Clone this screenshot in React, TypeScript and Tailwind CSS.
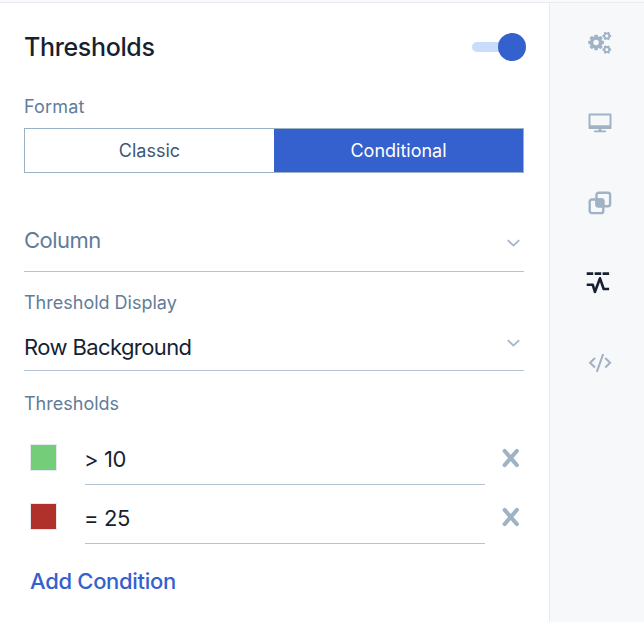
import React from "react";

function Gear({ x, y, r, teeth }: { x: number; y: number; r: number; teeth: number }) {
  const width = r * 0.46;
  return (
    <g transform={`translate(${x} ${y})`}>
      <circle r={r * 0.57} fill="none" stroke="#9fb3c5" strokeWidth={r * 0.44} />
      {Array.from({ length: teeth }, (_, i) => (
        <rect
          key={i}
          x={-width / 2}
          y={-r}
          width={width}
          height={r * 0.4}
          rx={r * 0.06}
          fill="#9fb3c5"
          transform={`rotate(${(i * 360) / teeth + (teeth === 6 ? 30 : 0)})`}
        />
      ))}
    </g>
  );
}

function GearsIcon() {
  return (
    <svg width="24" height="24" viewBox="0 0 24 24">
      <Gear x={8.1} y={11.5} r={7.8} teeth={8} />
      <Gear x={18.8} y={4.9} r={4.4} teeth={6} />
      <Gear x={18.8} y={18.6} r={4.4} teeth={6} />
    </svg>
  );
}

function Chevron() {
  return (
    <svg className="mr-1" width="13" height="9" viewBox="0 0 13 9" fill="none" stroke="#a4b5c8" strokeWidth="1.8">
      <path d="M0.8 1.2 6.5 6.6 12.2 1.2" />
    </svg>
  );
}

function CloseIcon() {
  return (
    <svg width="20" height="20" viewBox="0 0 20 20" fill="none" stroke="#9fb3c5" strokeWidth="4" strokeLinecap="round">
      <path d="M3.6 2.9 15.9 17.1M15.9 2.9 3.6 17.1" />
    </svg>
  );
}

function MonitorIcon() {
  return (
    <svg width="24" height="20" viewBox="0 0 24 20" fill="#9fb3c5">
      <path fillRule="evenodd" d="M1.3.5H22.7Q23.5.5 23.5 1.3V15.2Q23.5 16 22.7 16H1.3Q.5 16 .5 15.2V1.3Q.5.5 1.3.5ZM2.5 2.4V12.2H21.5V2.4Z" />
      <path d="M10.5 16H13.5V17.5H18V19.2H6V17.5H10.5Z" />
    </svg>
  );
}

function OverlapIcon() {
  return (
    <svg width="24" height="24" viewBox="0 0 24 24" fill="none" stroke="#9fb3c5" strokeWidth="2.4">
      <rect x="8.5" y="1.7" width="13.6" height="13.6" rx="2.2" />
      <rect x="1.7" y="8.5" width="13.6" height="13.6" rx="2.2" />
      <rect x="8.5" y="8.5" width="6.8" height="6.8" rx="1" fill="#9fb3c5" />
    </svg>
  );
}

function PulseIcon() {
  return (
    <svg width="24" height="22" viewBox="0 0 24 22" fill="none" stroke="#171f33" strokeWidth="2.6">
      <path d="M.7 1.6H7.2M8.7 1.6H15.2M16.6 1.6H23.1" />
      <path d="M.7 12.8H6.8L8.9 20 14 6.3 17.7 17H23.1" strokeLinejoin="round" />
    </svg>
  );
}

function CodeIcon() {
  return (
    <svg width="24" height="20" viewBox="0 0 24 20" fill="none" stroke="#9fb3c5" strokeWidth="2.1">
      <path d="M7 4.9 2.1 9.7 7 14.5M17.2 4.9 22.1 9.7 17.2 14.5M15.2 1 8.8 18.8" />
    </svg>
  );
}

function Condition({ color, value }: { color: string; value: string }) {
  return (
    <div className="flex h-[59px] items-start">
      <div className={`mt-[18px] ml-1.5 size-[27px] shrink-0 border border-[#e3e8ee] ${color}`} />
      <div className="ml-7 flex h-[59px] w-[400px] items-center border-b border-[#b4c4d5] pt-[9px] text-[22px] tracking-[-0.4px] text-[#171f33]">
        <span className="-ml-px">{value}</span>
      </div>
      <button className="mt-[22px] ml-4" aria-label="Remove condition"><CloseIcon /></button>
    </div>
  );
}

export default function App() {
  return (
    <div className="flex h-[622px] w-[644px] flex-col overflow-hidden bg-white font-['Inter',sans-serif]">
      <div className="h-[3px] shrink-0 border-b border-[#e9ebf3] bg-[#fafafa]" />
      <div className="flex min-h-0 flex-1">
        <main className="w-[549px] pr-[25px] pl-6">
          <header className="flex h-[87px] items-center justify-between">
            <h1 className="text-[25px] leading-8 font-medium tracking-[-0.35px] text-[#171f33]">Thresholds</h1>
            <div className="-mr-0.5 flex h-7 w-[54px] items-center justify-end rounded-full">
              <div className="-mr-3 h-2.5 w-[38px] rounded-full bg-[#c9dcfa]" />
              <div className="size-7 rounded-full bg-[#3561ce]" />
            </div>
          </header>
          <div className="h-[38px] pt-[3px] text-[18px] leading-7 tracking-[0.15px] text-[#5f7d99]">Format</div>
          <div className="grid h-[45px] grid-cols-2 border border-[#9bb2c5] text-[18px]">
            <button className="text-[#3e5874]">Classic</button>
            <button className="bg-[#3561ce] text-white">Conditional</button>
          </div>
          <div className="mt-[38px] flex h-[61px] items-start justify-between border-b border-[#b4c4d5] text-[22px] text-[#5f7d99]">
            <span className="pt-[13px] leading-8 tracking-[-0.5px]">Column</span>
            <div className="pt-7"><Chevron /></div>
          </div>
          <div className="pt-[17px] text-[18px] leading-7 text-[#5f7d99]">Threshold Display</div>
          <div className="flex h-[54px] items-start justify-between border-b border-[#b4c4d5] text-[22px] text-[#171f33]">
            <span className="pt-3.5 leading-8 tracking-[-0.6px]">Row Background</span>
            <div className="pt-[22px]"><Chevron /></div>
          </div>
          <div className="h-[55px] pt-[19px] text-[18px] leading-7 text-[#5f7d99]">Thresholds</div>
          <Condition color="bg-[#74cd78]" value="> 10" />
          <Condition color="bg-[#b0312b]" value="= 25" />
          <button className="mt-[21px] ml-1.5 block text-[22px] leading-8 font-medium tracking-[-0.3px] text-[#3561ce]">Add Condition</button>
        </main>
        <aside className="flex w-[95px] flex-col items-center border-l border-[#e8ecf2] bg-[#f7f8fa] pl-[5px]">
          <div className="flex h-20 items-center"><GearsIcon /></div>
          <div className="flex h-20 items-center"><MonitorIcon /></div>
          <div className="flex h-20 items-center"><OverlapIcon /></div>
          <div className="flex h-20 items-center pr-[3px]"><PulseIcon /></div>
          <div className="flex h-20 items-center"><CodeIcon /></div>
        </aside>
      </div>
    </div>
  );
}
